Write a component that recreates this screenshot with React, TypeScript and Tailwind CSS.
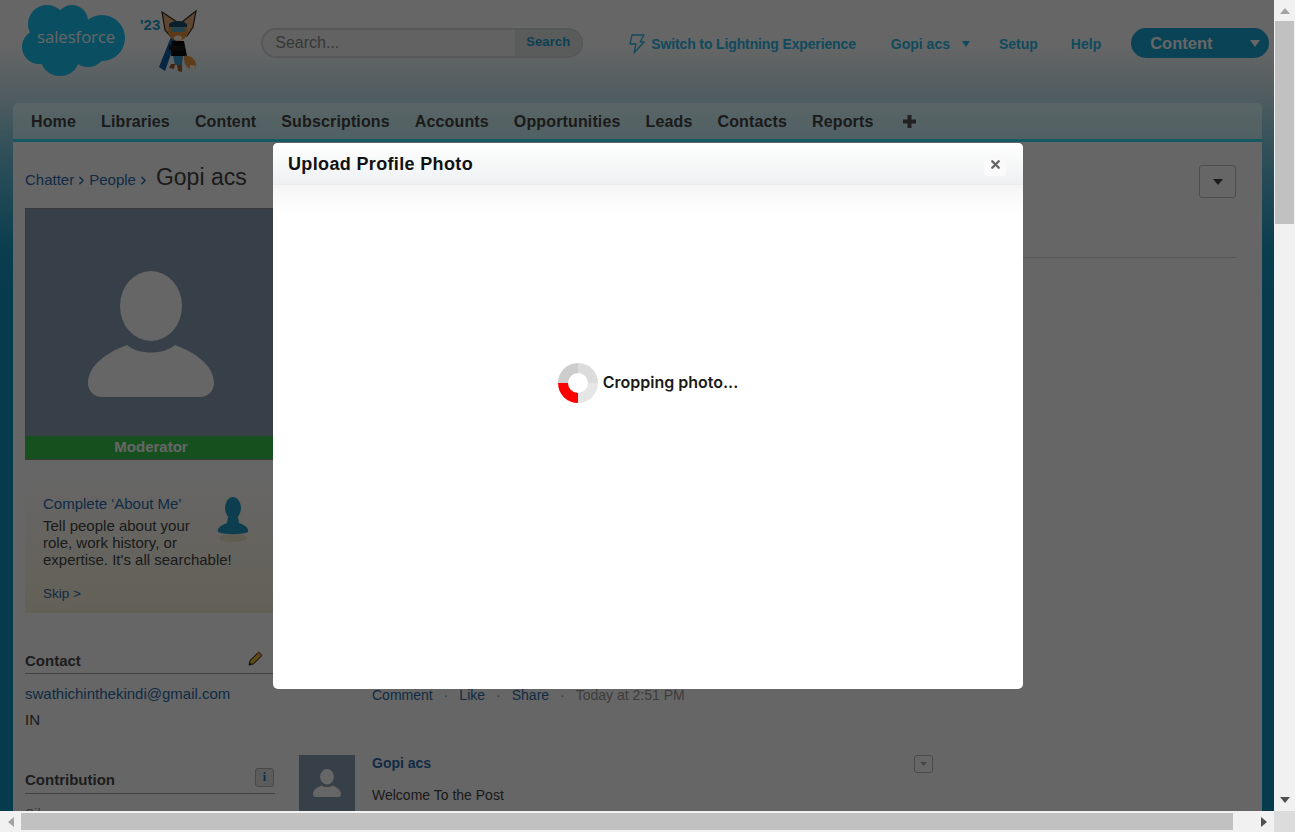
import { X, ChevronRight } from 'lucide-react';

const navItems = ['Home', 'Libraries', 'Content', 'Subscriptions', 'Accounts', 'Opportunities', 'Leads', 'Contacts', 'Reports'];

function Person({ className }: { className: string }) {
  return (
    <svg viewBox="0 0 126 126" className={className} fill="#fff">
      <ellipse cx="63" cy="35" rx="31" ry="35" />
      <path d="M39 74 C50 84 76 84 87 74 C106 81 126 94 126 112 C126 120 120 126 112 126 L14 126 C6 126 0 120 0 112 C0 94 20 81 39 74 Z" />
    </svg>
  );
}

function Cloud() {
  return (
    <div className="relative w-[104px] h-[72px] shrink-0">
      <svg viewBox="0 0 104 72" className="w-[104px] h-[72px]" fill="#17c4f2">
        <circle cx="25" cy="19" r="19" />
        <circle cx="50" cy="16" r="16" />
        <circle cx="80" cy="33" r="23" />
        <circle cx="17" cy="42" r="17" />
        <circle cx="38" cy="51" r="20" />
        <circle cx="66" cy="44" r="18" />
        <rect x="20" y="16" width="50" height="36" />
      </svg>
      <span className="absolute left-[15px] top-[20px] text-[16.6px] leading-[24px] text-white font-['Open_Sans',sans-serif]">salesforce</span>
    </div>
  );
}

function Fox() {
  return (
    <svg viewBox="0 0 42 64" className="w-[42px] h-[64px] shrink-0">
      <path d="M6 3 L21 13 L14 27 L9 21 Z" fill="#e8b080" stroke="#3a2a1a" strokeWidth="1.2" />
      <path d="M40 2 L26 13 L31 27 L37 18 Z" fill="#e8b080" stroke="#3a2a1a" strokeWidth="1.2" />
      <path d="M3 58 L15 28 L20 31 L9 62 Z" fill="#0f5fa8" />
      <ellipse cx="22" cy="22" rx="10" ry="10" fill="#e8953f" />
      <path d="M13 15 C17 11 27 11 31 15 L31 18 L13 18 Z" fill="#1c4f70" />
      <rect x="15" y="18" width="14" height="5" rx="2.5" fill="#5aa8c0" />
      <ellipse cx="22" cy="29" rx="4" ry="2.5" fill="#fff2dc" />
      <path d="M16 32 L28 32 L31 47 L15 47 Z" fill="#0c0c0c" />
      <path d="M13 36 L29 37 L27 42 L13 41 Z" fill="#1a1a1a" />
      <path d="M17 47 L27 47 L26 56 L19 56 Z" fill="#3a9ccf" />
      <path d="M28 47 C36 45 43 54 39 60 C33 62 27 56 28 47 Z" fill="#ee9a40" />
      <path d="M34 56 L40 57 L38 61 L34 60 Z" fill="#fff2dc" />
      <path d="M21 56 L26 56 L26 63 L22 62 Z" fill="#a5602a" />
      <path d="M15 55 L19 55 L18 60 L13 59 Z" fill="#a5602a" />
    </svg>
  );
}

function UserMenu() {
  return (
    <div className="flex items-center">
      <div className="flex items-center text-[14px] font-bold text-[#2ab8e8] mt-[2px]">
        <svg viewBox="0 0 16 20" className="w-4 h-5 -mt-[1px]" fill="none" stroke="currentColor" strokeWidth="1.3" strokeLinejoin="round">
          <path d="M3 1 H15 L11 8 H15 L5 19 L7 10 H1 Z" />
        </svg>
        <span className="ml-[6px] tracking-[-0.13px]">Switch to Lightning Experience</span>
        <span className="ml-[35px]">Gopi acs</span>
        <svg viewBox="0 0 8 6" className="w-2 h-[6px] ml-[12px]" fill="currentColor"><path d="M0 0 H8 L4 6 Z" /></svg>
        <span className="ml-[29px]">Setup</span>
        <span className="ml-[33px]">Help</span>
      </div>
      <div className="ml-[30px] w-[138px] h-[30px] rounded-[15px] bg-[#1ba6d8] text-white text-[16.5px] font-bold flex items-center justify-between pl-[19px] pr-[9px]">
        <span>Content</span>
        <svg viewBox="0 0 10 7" className="w-[10px] h-[7px]" fill="#fff"><path d="M0 0 H10 L5 7 Z" /></svg>
      </div>
    </div>
  );
}

function Header() {
  return (
    <div className="h-[103px] flex items-start shrink-0">
      <div className="ml-[22px] mt-[5px]"><Cloud /></div>
      <span className="ml-[14px] mt-[14px] text-[15px] font-bold text-[#1f9fd0]">'23</span>
      <div className="-ml-[4px] mt-[9px]"><Fox /></div>
      <div className="ml-[63px] mt-[28px] w-[322px] h-[30px] rounded-[15px] border-2 border-[#d5dadb] bg-[#f4f6f6] flex overflow-hidden">
        <span className="flex-1 pl-[12px] text-[16px] leading-[25px] text-[#8a8a8a]">Search...</span>
        <span className="w-[66px] bg-[#e1e5e6] text-[13px] font-bold text-[#1f9fd0] leading-[24px] pl-[11px] tracking-[0.1px]">Search</span>
      </div>
      <div className="ml-[46px] mt-[28px] h-[30px] flex items-center">
        <UserMenu />
      </div>
    </div>
  );
}

function Nav() {
  return (
    <div className="ml-[13px] w-[1249px] h-[39px] rounded-t-[5px] border-b-[3px] border-[#2de0f0] bg-[linear-gradient(#e0fbff,#c8f0f8)] flex items-center pl-[18px] pt-[1px] gap-[25px] text-[16px] font-bold tracking-[0.14px] text-[#444] shrink-0">
      {navItems.map(item => (
        <span key={item}>{item}</span>
      ))}
      <svg viewBox="0 0 13 13" className="w-[13px] h-[13px] ml-[4px]" fill="#555">
        <path d="M4.5 0 H8.5 V4.5 H13 V8.5 H8.5 V13 H4.5 V8.5 H0 V4.5 H4.5 Z" />
      </svg>
    </div>
  );
}

function LeftColumn() {
  return (
    <div className="w-[250px] shrink-0 overflow-hidden">
      <div className="h-[66px] pt-[11px] flex items-center text-[15px] text-[#2c6cab]">
        <span>Chatter</span>
        <ChevronRight size={13} strokeWidth={2.8} className="mx-[1px]" />
        <span>People</span>
        <ChevronRight size={13} strokeWidth={2.8} className="mx-[1px]" />
        <span className="ml-[5px] -mt-[6px] text-[23px] text-[#444]">Gopi acs</span>
      </div>
      <div className="h-[252px] border border-[#8f8f8f] bg-[#8a9eb7] flex flex-col">
        <div className="flex-1 flex justify-center pt-[62px] pl-[2px]">
          <Person className="w-[126px] h-[126px]" />
        </div>
        <div className="h-[23px] bg-[#3ac84e] text-center text-[15px] font-bold leading-[21px] text-white pl-[2px]">Moderator</div>
      </div>
      <div className="mt-[18px] h-[135px] bg-[linear-gradient(#fff,#f8f1d8)] pl-[18px] pt-[17px] relative text-[15px] leading-[17px] text-[#444]">
        <div className="text-[#2c6cab] mb-[5px]">Complete 'About Me'</div>
        <div>Tell people about your<br />role, work history, or<br />expertise. It's all searchable!</div>
        <div className="mt-[17px] text-[13.5px] text-[#2c6cab]">Skip &gt;</div>
        <svg viewBox="0 0 32 46" className="absolute left-[192px] top-[19px] w-[32px] h-[46px]">
          <ellipse cx="16" cy="41" rx="14" ry="4" fill="#eee6cc" />
          <ellipse cx="16" cy="11" rx="8" ry="11" fill="#1f9cc6" />
          <path d="M11 20 L21 20 L22 26 C28 28 32 31 31 35 C24 38 8 38 1 35 C0 31 4 28 10 26 Z" fill="#1f9cc6" />
        </svg>
      </div>
      <div className="mt-[39px] h-[22px] border-b border-[#a8a8a8] flex items-start justify-between text-[15px] leading-[17px] font-bold text-[#4a4a4a]">
        <span>Contact</span>
        <svg viewBox="0 0 14 14" className="w-[15px] h-[15px] mr-[12px] -mt-[1px]">
          <path d="M10 1 L13 4 L5 12 L1 13 L2 9 Z" fill="#f2c23a" stroke="#4a3a10" strokeWidth="1" strokeLinejoin="round" />
          <path d="M10 1 L13 4 L11.5 5.5 L8.5 2.5 Z" fill="#e88a5a" />
          <path d="M1 13 L1.6 10.6 L3.4 12.4 Z" fill="#222" />
        </svg>
      </div>
      <div className="mt-[11px] text-[15px] leading-[18px] text-[#2c6cab]">swathichinthekindi@gmail.com</div>
      <div className="mt-[8px] text-[15px] leading-[18px] text-[#444]">IN</div>
      <div className="mt-[40px] h-[25px] border-b border-[#a8a8a8] flex items-start justify-between text-[15px] leading-[17px] font-bold text-[#4a4a4a]">
        <span className="mt-[2px]">Contribution</span>
        <span className="mr-[1px] -mt-[1px] w-[19px] h-[19px] rounded-[3px] border border-[#b4b4b4] bg-[#e6e6e6] text-[12px] leading-[17px] text-center text-[#2470c0] font-['Liberation_Serif',serif]">i</span>
      </div>
      <div className="mt-[10px] text-[14px] text-[#888]">Silver</div>
    </div>
  );
}

function RightColumn() {
  return (
    <div className="flex-1 pl-[24px] pr-[26px] text-[14px]">
      <div className="h-[116px] border-b border-[#d8d8d8] flex justify-end pt-[23px]">
        <div className="w-[37px] h-[33px] rounded-[3px] border border-[#c0c0c0] flex items-center justify-center">
          <svg viewBox="0 0 10 6" className="w-[10px] h-[6px]" fill="#444"><path d="M0 0 H10 L5 6 Z" /></svg>
        </div>
      </div>
      <div className="pl-[73px] pt-[429px] text-[#999] leading-[17px]">
        <span className="text-[#2c6cab]">Comment</span>
        <span className="mx-[11px]">·</span>
        <span className="text-[#2c6cab]">Like</span>
        <span className="mx-[11px]">·</span>
        <span className="text-[#2c6cab]">Share</span>
        <span className="mx-[11px]">·</span>
        <span>Today at 2:51 PM</span>
      </div>
      <div className="mt-[51px] flex w-[634px]">
        <div className="w-[56px] h-[56px] bg-[#8a9eb7] flex justify-center pt-[14px] shrink-0">
          <Person className="w-[28px] h-[28px]" />
        </div>
        <div className="flex-1 ml-[17px]">
          <div className="font-bold text-[#2c6cab] leading-[17px]">Gopi acs</div>
          <div className="mt-[15px] text-[#444] leading-[17px]">Welcome To the Post</div>
        </div>
        <div className="w-[19px] h-[18px] rounded-[3px] border border-[#b8b8b8] flex items-center justify-center">
          <svg viewBox="0 0 8 5" className="w-[7px] h-[4px]" fill="#aaa"><path d="M0 0 H8 L4 5 Z" /></svg>
        </div>
      </div>
    </div>
  );
}

function Modal() {
  return (
    <div className="absolute left-[273px] top-[143px] w-[750px] h-[546px] rounded-[5px] bg-white overflow-hidden">
      <div className="h-[42px] pt-[2px] border-b border-[#e8ecee] bg-[linear-gradient(#ffffff,#eef1f2)] flex items-center justify-between pl-[15px] pr-[17px]">
        <span className="text-[18px] font-bold tracking-[0.35px] text-[#111]">Upload Profile Photo</span>
        <span className="w-[22px] h-[22px] rounded-[3px] bg-[#fafafa] flex items-center justify-center">
          <X size={13} strokeWidth={4.5} className="text-[#666]" />
        </span>
      </div>
      <div className="h-[30px] bg-[linear-gradient(#f5f5f5,#ffffff)]" />
      <div className="pt-[148px] flex justify-center items-center">
        <div className="flex items-center gap-[5px]">
          <div className="w-10 h-10 rounded-full bg-[conic-gradient(#dcdcdc_0_25%,#e6e6e6_25%_50%,#ff0000_50%_75%,#cdcdcd_75%)] flex items-center justify-center">
            <div className="w-5 h-5 rounded-full bg-white" />
          </div>
          <span className="text-[16px] font-semibold text-[#1a1a1a] font-['Inter',sans-serif] -mt-[2px]">Cropping photo...</span>
        </div>
      </div>
    </div>
  );
}

function VScroll() {
  return (
    <div className="w-[21px] shrink-0 bg-[#f1f1f1] flex flex-col items-center">
      <svg viewBox="0 0 10 6" className="w-[10px] h-[6px] mt-[8px]" fill="#a3a3a3"><path d="M0 6 H10 L5 0 Z" /></svg>
      <div className="w-[19px] h-[203px] bg-[#c1c1c1] mt-[7px]" />
      <svg viewBox="0 0 10 6" className="w-[10px] h-[6px] mt-auto mb-[8px]" fill="#505050"><path d="M0 0 H10 L5 6 Z" /></svg>
    </div>
  );
}

function HScroll() {
  return (
    <div className="h-[21px] shrink-0 bg-[#f1f1f1] flex items-center">
      <svg viewBox="0 0 6 10" className="w-[6px] h-[10px] ml-[8px]" fill="#a3a3a3"><path d="M6 0 V10 L0 5 Z" /></svg>
      <div className="w-[1212px] h-[17px] bg-[#c1c1c1] ml-[7px]" />
      <svg viewBox="0 0 6 10" className="w-[6px] h-[10px] ml-[28px]" fill="#505050"><path d="M0 0 V10 L6 5 Z" /></svg>
      <div className="w-[21px] h-[21px] bg-[#dcdcdc] ml-auto" />
    </div>
  );
}

export default function App() {
  return (
    <div className="h-screen w-screen overflow-hidden flex flex-col font-['Liberation_Sans',Arial,sans-serif]">
      <div className="flex-1 min-h-0 flex">
        <div className="relative flex-1 overflow-hidden flex flex-col bg-[linear-gradient(#ffffff_0px,#ffffff_45px,#c4e6f0_100px,#7ac8e0_150px,#1a9ac4_250px,#0f93c0_300px)]">
          <Header />
          <Nav />
          <div className="ml-[13px] w-[1249px] flex-1 min-h-0 bg-white flex pl-[12px] overflow-hidden">
            <LeftColumn />
            <RightColumn />
          </div>
          <div className="absolute inset-0 bg-black/60" />
          <Modal />
        </div>
        <VScroll />
      </div>
      <HScroll />
    </div>
  );
}
